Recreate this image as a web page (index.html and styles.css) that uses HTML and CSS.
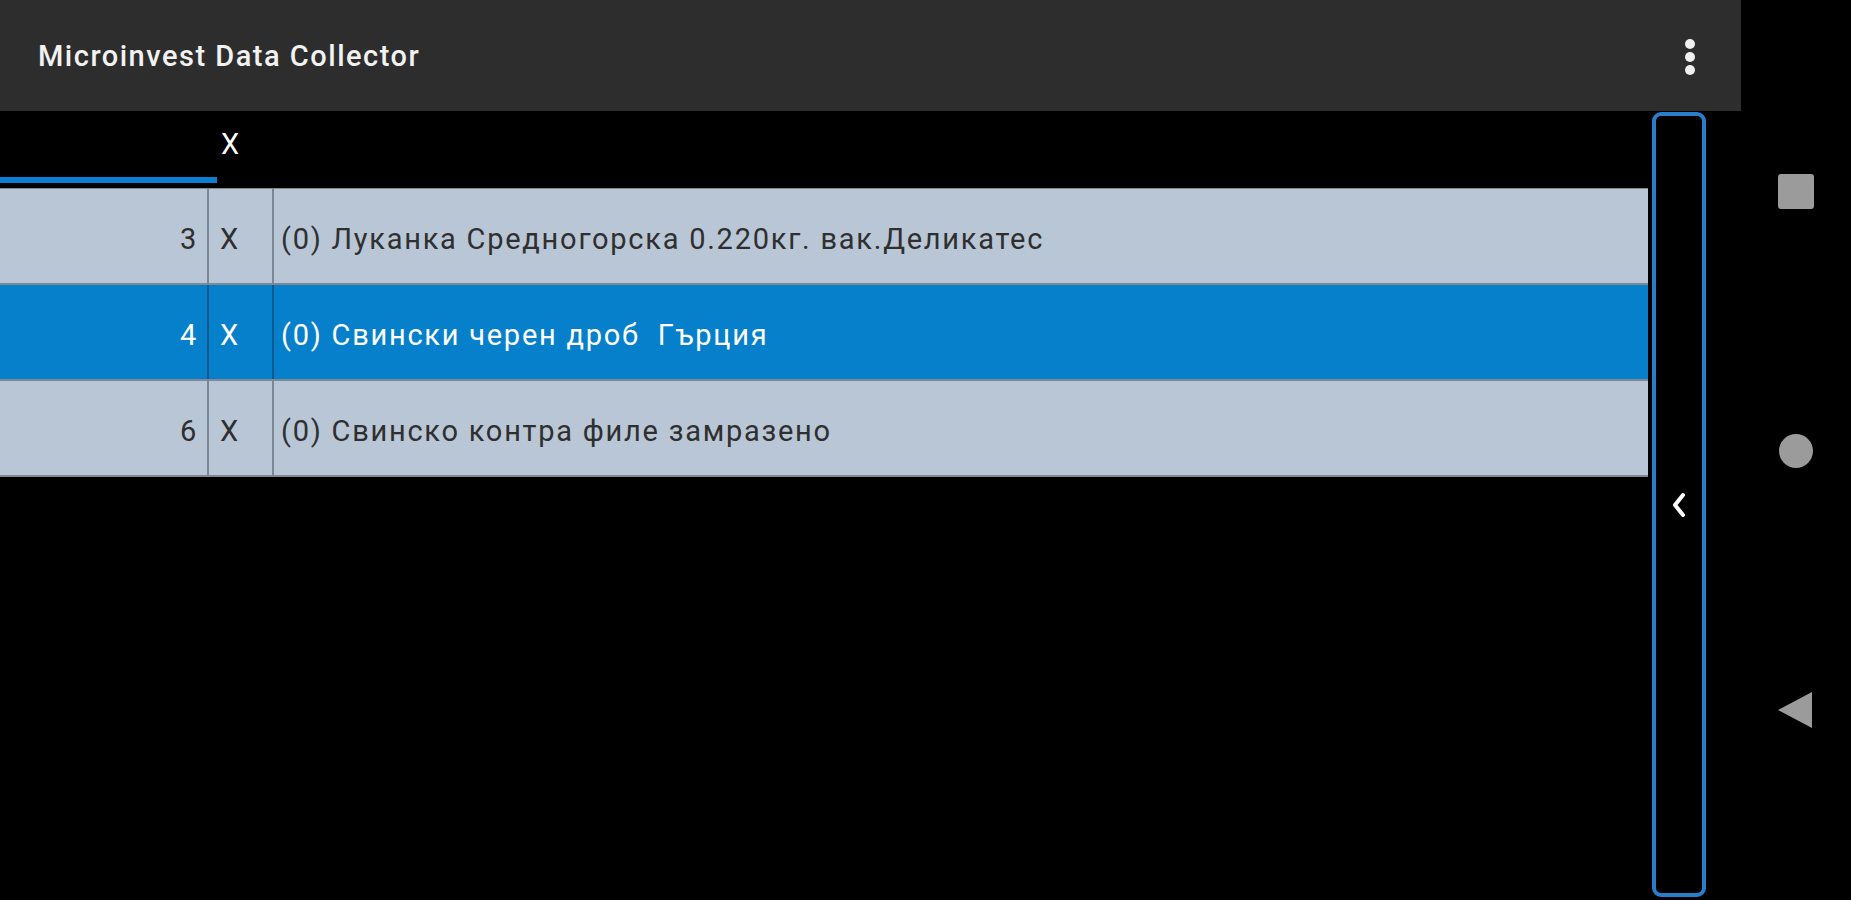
FILE: index.html
```html
<!DOCTYPE html>
<html lang="bg">
<head>
    <meta charset="UTF-8">
    <meta name="viewport" content="width=device-width, initial-scale=1.0">
    <title>Microinvest Data Collector</title>
    <link rel="stylesheet" href="styles.css">
</head>
<body>
    <div class="screen">
        <div class="app">
            <div class="app-bar">
                <span class="app-title">Microinvest Data Collector</span>
                <span class="overflow"><i></i><i></i><i></i></span>
            </div>

            <div class="content">
                <div class="main">
                    <div class="tabs">
                        <div class="tab active"></div>
                        <div class="tab">X</div>
                    </div>

                    <div class="rows">
                        <div class="row">
                            <div class="cell num">3</div>
                            <div class="cell mark">X</div>
                            <div class="cell name">(0) Луканка Средногорска 0.220кг. вак.Деликатес</div>
                        </div>
                        <div class="row selected">
                            <div class="cell num">4</div>
                            <div class="cell mark">X</div>
                            <div class="cell name">(0) Свински черен дроб&nbsp; Гърция</div>
                        </div>
                        <div class="row">
                            <div class="cell num">6</div>
                            <div class="cell mark">X</div>
                            <div class="cell name">(0) Свинско контра филе замразено</div>
                        </div>
                    </div>
                </div>

                <div class="side-panel">
                    <svg class="chevron" width="14" height="26" viewBox="0 0 14 26">
                        <path d="M11 3 L3 13 L11 23" fill="none" stroke="#fff" stroke-width="4" stroke-linecap="round" stroke-linejoin="round"/>
                    </svg>
                </div>
            </div>
        </div>

        <!-- system navigation bar -->
        <div class="nav-bar">
            <span class="nav-square"></span>
            <span class="nav-circle"></span>
            <svg class="nav-back" width="36" height="38" viewBox="0 0 36 38">
                <path d="M1 19 L35 1 L35 37 Z" fill="#9b9b9b"/>
            </svg>
        </div>
    </div>
</body>
</html>
```

FILE: styles.css
```css
html, body { margin: 0; padding: 0; background: #000; }
body { font-family: Roboto, "Noto Sans", sans-serif; }

.screen {
    display: flex;
    width: 1851px;
    height: 900px;
    overflow: hidden;
}

.app {
    width: 1741px;
    display: flex;
    flex-direction: column;
}

.app-bar {
    height: 111px;
    background: #2d2d2d;
    display: flex;
    align-items: center;
    justify-content: space-between;
    padding: 0 46px 0 38px;
    flex-shrink: 0;
}
.app-title {
    color: #f2f2f2;
    font-size: 29px;
    letter-spacing: 1.5px;
    font-weight: 500;
}
.overflow {
    display: flex;
    flex-direction: column;
    gap: 3px;
    margin-top: 2px;
}
.overflow i {
    display: block;
    width: 10px;
    height: 10px;
    border-radius: 50%;
    background: #f0f0f0;
}

.content {
    flex: 1;
    display: flex;
    gap: 4px;
}
.main { width: 1648px; }

.tabs {
    display: flex;
    height: 77px;
}
.tab {
    color: #fff;
    font-size: 29px;
    padding: 16px 0 0 4px;
}
.tab.active {
    width: 217px;
    box-sizing: border-box;
    border-bottom: 6px solid #0a7fd2;
    margin-bottom: 5px;
    padding: 0;
}

.rows {
    display: flex;
    flex-direction: column;
    gap: 2px;
    padding: 1px 0 2px;
    background: #7f8996;
}
.row {
    display: flex;
    height: 94px;
    background: #b9c6d6;
    color: #2f2f2f;
    font-size: 29px;
    letter-spacing: 1.75px;
}
.row.selected {
    background: #0680ca;
    color: #fff;
}
.cell {
    display: flex;
    align-items: center;
    padding-top: 6px;
    box-sizing: border-box;
}
.num {
    width: 209px;
    justify-content: flex-end;
    padding-right: 9px;
    border-right: 2px solid #7c8795;
}
.mark {
    width: 65px;
    padding-left: 11px;
    border-right: 2px solid #7c8795;
}
.selected .num, .selected .mark { border-right-color: #0a5a92; }
.name { padding-left: 7px; }

.side-panel {
    width: 54px;
    box-sizing: border-box;
    margin: 1px 0 3px;
    border: 4px solid #2a7dcb;
    border-radius: 9px;
    display: flex;
    align-items: center;
    justify-content: center;
}

.nav-bar {
    width: 110px;
    display: flex;
    flex-direction: column;
    align-items: center;
    padding-top: 174px;
    box-sizing: border-box;
}
.nav-square {
    width: 36px;
    height: 35px;
    border-radius: 3px;
    background: #9b9b9b;
}
.nav-circle {
    width: 34px;
    height: 34px;
    border-radius: 50%;
    background: #9b9b9b;
    margin-top: 225px;
}
.nav-back { margin-top: 223px; margin-left: -2px; }
```
